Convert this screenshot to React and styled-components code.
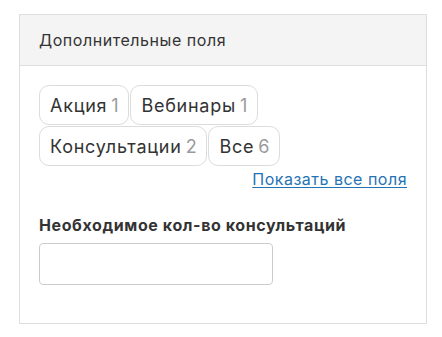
import React from "react";
import styled, { createGlobalStyle } from "styled-components";

const Global = createGlobalStyle`
  html, body { margin: 0; padding: 0; background: #fff; }
  body { font-family: Inter, "Noto Sans", sans-serif; color: #333; }
  * { box-sizing: border-box; }
`;

const Page = styled.div`
  padding: 14px 15px 0 19px;
`;

const Card = styled.section`
  width: 408px;
  border: 1px solid #dedede;
  background: #fff;
`;

const Header = styled.div`
  height: 51px;
  background: #f4f4f4;
  border-bottom: 1px solid #dedede;
  display: flex;
  align-items: center;
  padding: 0 19px 1px;
  font-size: 16px;
  letter-spacing: 0.55px;
  color: #333;
`;

const Body = styled.div`
  padding: 19px 19px 38px 19px;
  display: flex;
  flex-direction: column;
`;

const Chips = styled.div`
  display: flex;
  flex-wrap: wrap;
  gap: 1px 1px;
`;

const Chip = styled.button`
  height: 40px;
  padding: 0 9px 0 10px;
  border: 1px solid #dcdcdc;
  border-radius: 10px;
  background: #fff;
  font-family: inherit;
  font-size: 18px;
  letter-spacing: 0.75px;
  color: #333;
  display: flex;
  align-items: center;
  gap: 4px;
  cursor: pointer;
`;

const Count = styled.span`
  color: #9a9a9a;
`;

const LinkRow = styled.div`
  display: flex;
  justify-content: flex-end;
  margin-top: 2px;
`;

const Link = styled.a`
  font-size: 16px;
  line-height: 22px;
  letter-spacing: 0.5px;
  color: #2673b4;
  text-decoration: underline;
  text-underline-offset: 2px;
  cursor: pointer;
`;

const Label = styled.label`
  margin-top: 24px;
  font-size: 16px;
  font-weight: 700;
  letter-spacing: 0.6px;
  color: #333;
  line-height: 22px;
`;

const Input = styled.input`
  margin-top: 7px;
  width: 234px;
  height: 42px;
  border: 1px solid #cccccc;
  border-radius: 4px;
  font-family: inherit;
  font-size: 16px;
  padding: 0 10px;
  outline: none;
`;

const chips = [
  ["Акция", 1],
  ["Вебинары", 1],
  ["Консультации", 2],
  ["Все", 6],
];

export default function App() {
  return (
    <Page>
      <Global />
      <Card>
        <Header>Дополнительные поля</Header>
        <Body>
          <Chips>
            {chips.map(([name, n]) => (
              <Chip key={name}>
                {name}
                <Count>{n}</Count>
              </Chip>
            ))}
          </Chips>
          <LinkRow>
            <Link>Показать все поля</Link>
          </LinkRow>
          <Label>Необходимое кол-во консультаций</Label>
          <Input type="text" />
        </Body>
      </Card>
    </Page>
  );
}
